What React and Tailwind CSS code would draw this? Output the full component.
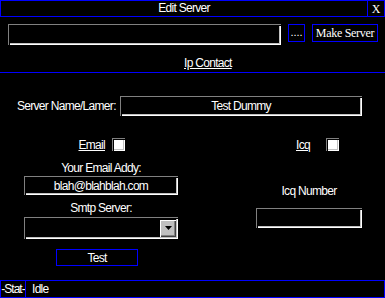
const sunken =
  'shadow-[inset_1px_1px_0_#808080,inset_2px_2px_0_#000,inset_-1px_-1px_0_#ffffff,inset_-2px_-2px_0_#c0c0c0]';

const Field = ({ className = '', children }) => (
  <div className={`bg-black flex items-center justify-center ${sunken} ${className}`}>{children}</div>
);

const CheckBox = () => (
  <div className="w-[13px] h-[13px] bg-white shadow-[inset_1px_1px_0_#808080,inset_2px_2px_0_#000,inset_-1px_-1px_0_#ffffff,inset_-2px_-2px_0_#c0c0c0]" />
);

const App = () => {
  return (
    <div className="w-[385px] h-[298px] bg-black text-white text-[12px] tracking-[-0.7px] font-['Liberation_Sans',Arial,sans-serif] flex flex-col overflow-hidden">
      {/* title bar */}
      <div className="h-[17px] border border-[#0000ff] flex shrink-0">
        <div className="flex-1 text-center leading-[15px]">Edit Server</div>
        <div className="w-[17px] border-l border-[#0000ff] flex items-center justify-center font-['Liberation_Serif',serif] tracking-normal leading-none">
          X
        </div>
      </div>

      {/* path row */}
      <div className="mt-[7px] flex items-start pl-[8px] gap-[7px]">
        <Field className="w-[273px] h-[21px]" />
        <button className="w-[17px] h-[18px] border border-[#0000ff] tracking-normal text-[11px] leading-none pb-[3px] flex items-end justify-center">
          ....
        </button>
        <button className="w-[66px] h-[18px] border border-[#0000ff] font-['Liberation_Serif',serif] tracking-[-0.3px] leading-none flex items-center justify-center whitespace-nowrap">
          Make Server
        </button>
      </div>

      <div className="mt-[11px] h-[14px] leading-[14px] pl-[184px]">
        <span className="underline">Ip Contact</span>
      </div>
      <div className="mt-[2px] border-t border-[#0000ff]" />

      {/* server name */}
      <div className="mt-[23px] flex items-center h-[20px]">
        <div className="pl-[17px] w-[120px] whitespace-nowrap">Server Name/Lamer:</div>
        <Field className="w-[242px] h-[20px]">Test Dummy</Field>
      </div>

      {/* checkboxes */}
      <div className="mt-[22px] flex items-center h-[13px]">
        <div className="w-[105px] text-right underline">Email</div>
        <div className="ml-[7px]">
          <CheckBox />
        </div>
        <div className="ml-[171px] underline">Icq</div>
        <div className="ml-[16px]">
          <CheckBox />
        </div>
      </div>

      {/* lower section */}
      <div className="mt-[10px] flex">
        <div className="ml-[24px] w-[154px] flex flex-col">
          <div className="h-[14px] leading-[14px] text-center">Your Email Addy:</div>
          <Field className="mt-[1px] h-[19px]">blah@blahblah.com</Field>
          <div className="mt-[6px] h-[14px] leading-[14px] text-center">Smtp Server:</div>
          <Field className="mt-[2px] h-[22px] justify-end pr-[2px]">
            <div className="w-[16px] h-[17px] bg-[#c0c0c0] shadow-[inset_1px_1px_0_#ffffff,inset_-1px_-1px_0_#404040,inset_-2px_-2px_0_#808080] flex items-center justify-center">
              <svg width="7" height="4" viewBox="0 0 7 4">
                <polygon points="0,0 7,0 3.5,4" fill="#000" />
              </svg>
            </div>
          </Field>
          <button className="mt-[10px] ml-[32px] w-[82px] h-[17px] border border-[#0000ff] leading-none flex items-center justify-center">
            Test
          </button>
        </div>
        <div className="ml-[78px] w-[106px] flex flex-col">
          <div className="mt-[23px] h-[14px] leading-[14px] text-center">Icq Number</div>
          <Field className="mt-[10px] h-[20px]" />
        </div>
      </div>

      {/* status bar */}
      <div className="mt-auto h-[18px] border border-[#0000ff] flex shrink-0">
        <div className="w-[25px] border-r border-[#0000ff] flex items-center justify-center overflow-hidden whitespace-nowrap leading-none tracking-[-1px]">
          -Stat-
        </div>
        <div className="pl-[6px] flex items-center leading-none">Idle</div>
      </div>
    </div>
  );
};

export default App;
